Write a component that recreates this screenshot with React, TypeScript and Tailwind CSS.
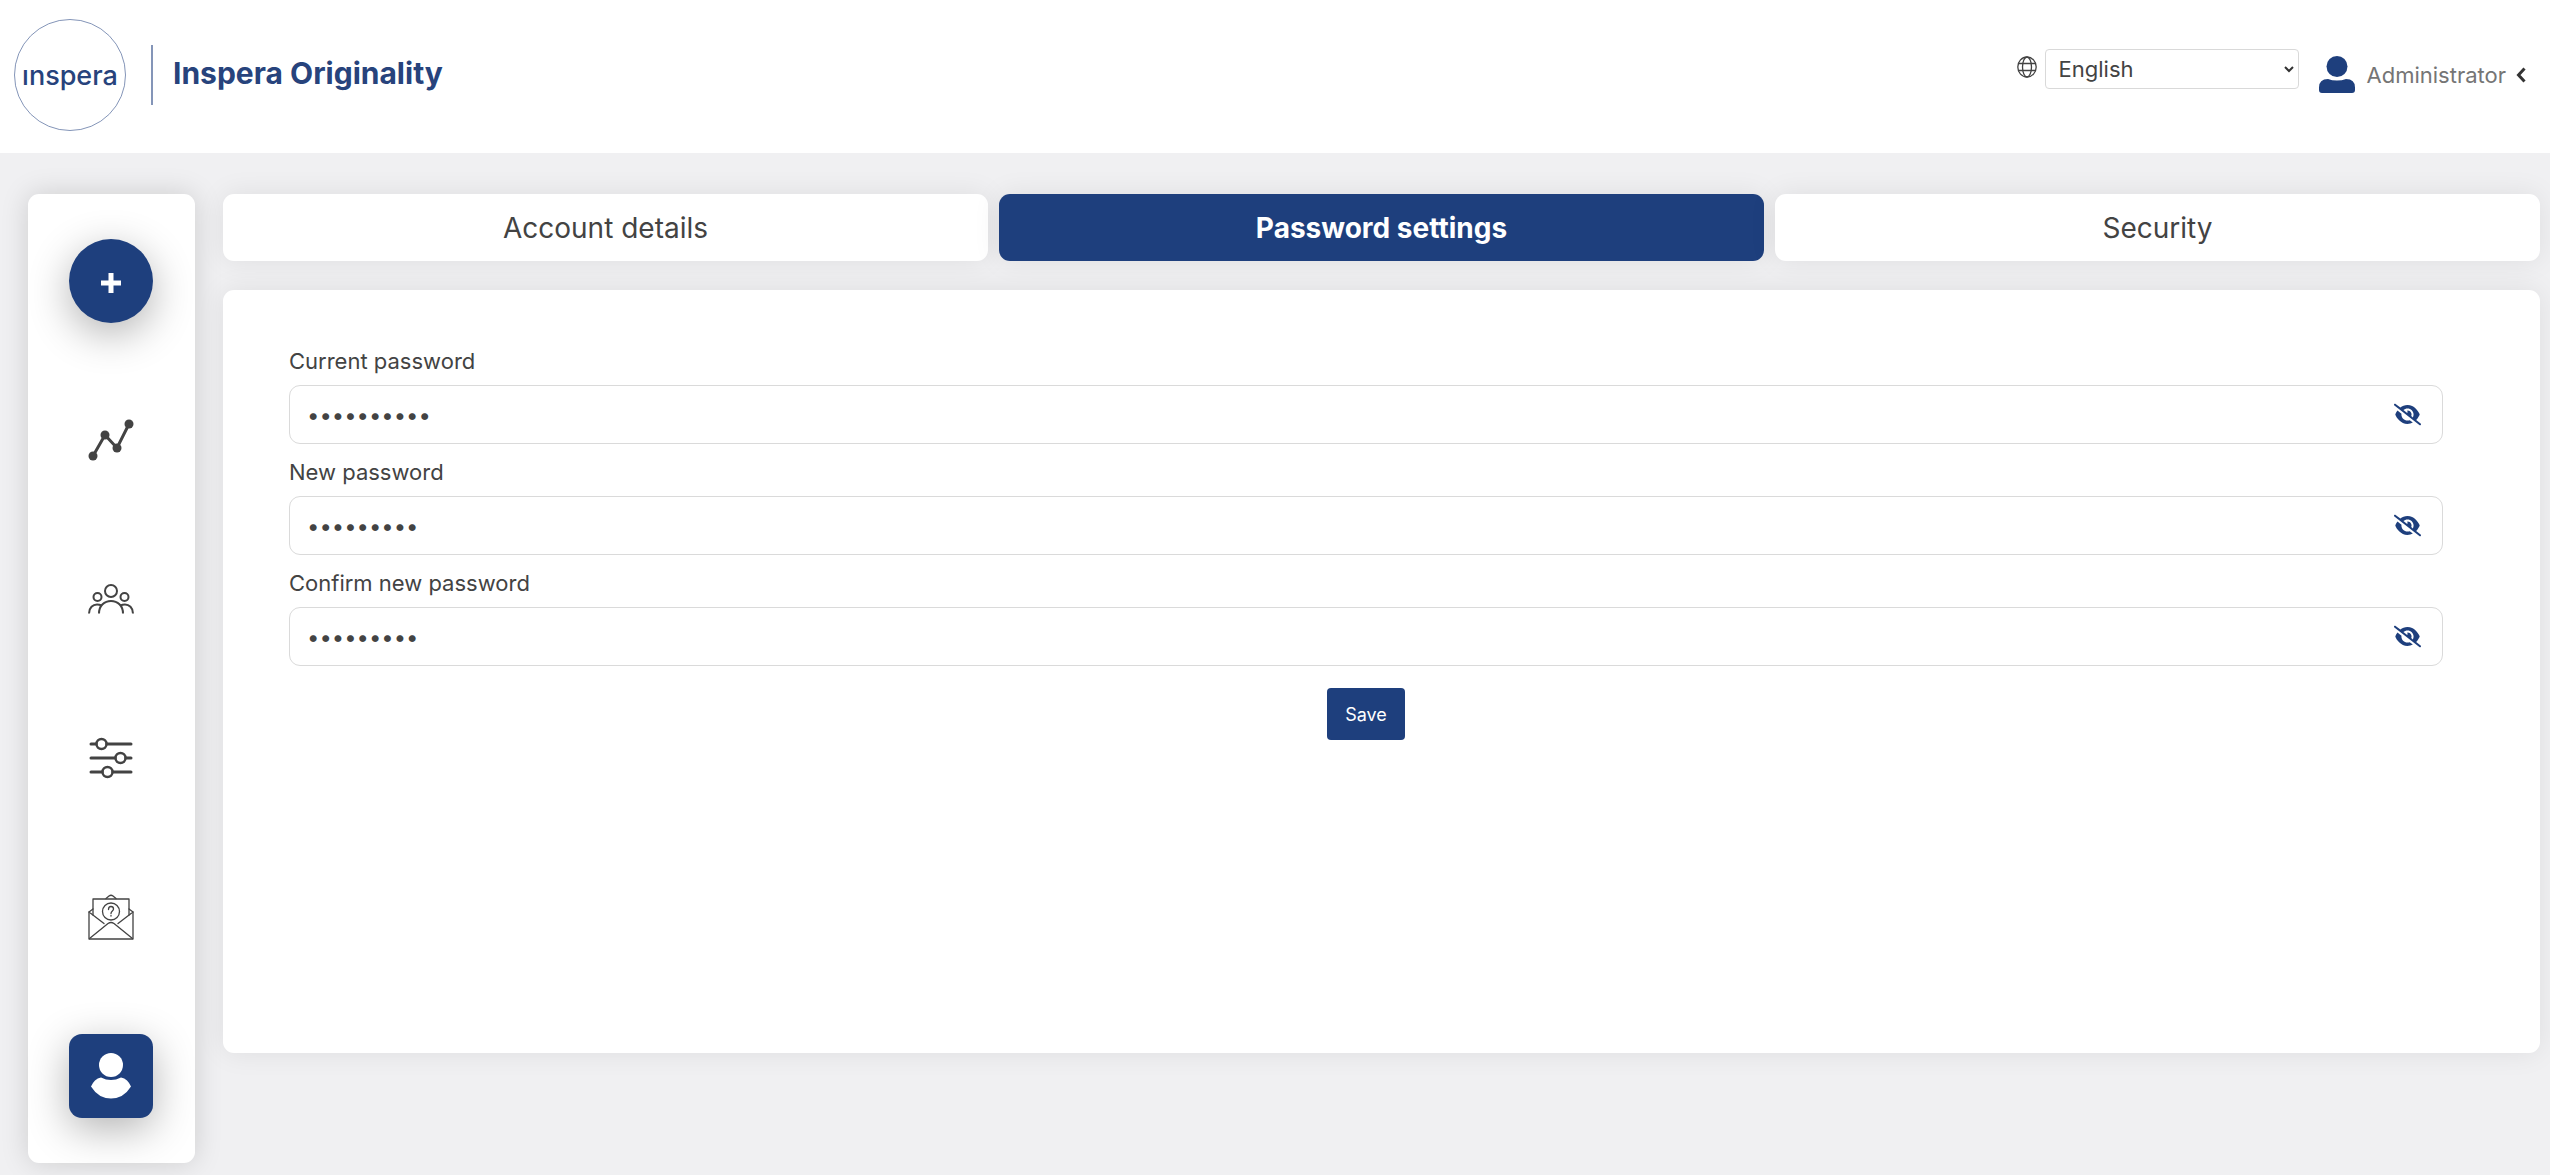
import { useState } from "react";
import { FaEyeSlash, FaEye } from "react-icons/fa6";

const card = "rounded-[11px] bg-white";

function Logo() {
  return (
    <a href="#" className="flex items-center text-[#27437c]">
      <span className="flex h-28 w-28 items-center justify-center rounded-full border border-[#8495b8] text-[27px] leading-none font-medium">
        ınspera
      </span>
      <span className="ml-[25px] h-[60px] w-[2px] bg-[#8495b8]" />
      <span className="ml-5 pb-1 text-[30px] leading-none font-bold">Inspera Originality</span>
    </a>
  );
}

function GlobeIcon() {
  return (
    <svg className="mt-[7px] mr-2" width="20" height="22" viewBox="0 0 20 22" fill="none" stroke="#434343" strokeWidth="1.300" aria-hidden="true">
      <ellipse cx="10" cy="11" rx="9.200" ry="10" />
      <ellipse cx="10" cy="11" rx="4.500" ry="10" />
      <path d="M1.500 7.500h17M1.500 14.500h17" />
    </svg>
  );
}

function TrendIcon() {
  return (
    <svg width="46" height="42" viewBox="0 0 46 42" fill="#434343" stroke="#434343" aria-hidden="true">
      <path d="M5 37 17 16 29 29 41 5" fill="none" strokeWidth="3" />
      <circle cx="5" cy="37" r="4.500" stroke="none" />
      <circle cx="17" cy="16" r="4.500" stroke="none" />
      <circle cx="29" cy="29" r="4.500" stroke="none" />
      <circle cx="41" cy="5" r="4.500" stroke="none" />
    </svg>
  );
}

function PeopleIcon() {
  return (
    <svg width="46" height="32" viewBox="0 0 46 32" fill="none" stroke="#434343" strokeWidth="2" aria-hidden="true">
      <circle cx="23" cy="8" r="6" />
      <circle cx="9.500" cy="14" r="4" />
      <circle cx="36.500" cy="14" r="4" />
      <path d="M11 30.500C11 22.500 16.500 18 23 18s12 4.500 12 12.500" />
      <path d="M1 30.500C1 24.500 5 21.500 9 21.500q2.500 0 4.500 1" />
      <path d="M45 30.500c0-6-4-9-8-9q-2.500 0-4.500 1" />
    </svg>
  );
}

function SlidersIcon() {
  return (
    <svg width="44" height="42" viewBox="0 0 44 42" fill="none" stroke="#434343" strokeWidth="3" strokeLinecap="round" aria-hidden="true">
      <path d="M2 7h5M18 7h24M2 21h24M37 21h5M2 35h11M24 35h18" />
      <circle cx="12.500" cy="7" r="5" strokeWidth="2.500" />
      <circle cx="31.500" cy="21" r="5" strokeWidth="2.500" />
      <circle cx="18.500" cy="35" r="5" strokeWidth="2.500" />
    </svg>
  );
}

function MailIcon() {
  return (
    <svg width="46" height="46" viewBox="0 0 46 46" fill="none" stroke="#434343" strokeWidth="1.300" strokeLinejoin="round" strokeLinecap="round" aria-hidden="true">
      <path d="M1 18v27h44V18" />
      <path d="M5 21V5h36v16" />
      <path d="M18 4.500 21 2q2-1.500 4 0l3 2.500" />
      <path d="M5 15 1 18l15 11.500M41 15l4 3-15 11.500" />
      <path d="M1.500 44.500 20 29.500q3-2 6 0l18.500 15" />
      <circle cx="23" cy="17.500" r="8.500" />
      <path d="M20.500 15.500q0-3 2.500-3t2.500 2.500c0 2-2.500 2-2.500 4.500M23 21.500v.5" />
    </svg>
  );
}

function ProfileIcon() {
  return (
    <svg width="42" height="46" viewBox="0 0 42 46" fill="white" aria-hidden="true">
      <circle cx="21" cy="12" r="12" />
      <path d="M11 24.500q10 5 20 0 3.500.5 6 3 2.500 2.500 4 6Q33.500 45.500 21 45.500T1 33.500q1.500-3.500 4-6 2.500-2.500 6-3z" />
    </svg>
  );
}

const navItems = [
  { name: "Analytics", Icon: TrendIcon },
  { name: "Groups", Icon: PeopleIcon },
  { name: "Settings", Icon: SlidersIcon },
  { name: "Support", Icon: MailIcon },
];

const glow = "shadow-[0_11px_42px_rgba(0,0,0,0.3)]";

function Sidebar() {
  return (
    <nav className={`${card} flex w-[167px] shrink-0 flex-col items-start gap-[75px] py-[45px] pl-[41px] shadow-[0_0_28px_rgba(0,0,0,0.15)]`}>
      <button aria-label="Add" className={`${glow} flex h-[84px] w-[84px] items-center justify-center rounded-full bg-[#1e3f7d] pt-1 text-white`}>
        <svg width="20" height="20" viewBox="0 0 20 20" fill="currentColor" aria-hidden="true">
          <path d="M7.500 0h5v7.500H20v5h-7.500V20h-5v-7.500H0v-5h7.500z" />
        </svg>
      </button>
      {navItems.map(({ name, Icon }) => (
        <a key={name} href="#" aria-label={name} className="flex h-[84px] w-[84px] items-center justify-center">
          <Icon />
        </a>
      ))}
      <a href="#" aria-label="Profile" className={`${glow} flex h-[84px] w-[84px] items-center justify-center rounded-[13px] bg-[#1e3f7d]`}>
        <ProfileIcon />
      </a>
    </nav>
  );
}

function Header() {
  return (
    <header className="flex h-[153px] items-start justify-between bg-white pt-[19px] pr-6 pl-[14px]">
      <Logo />
      <div className="flex items-start pt-[30px]">
        <GlobeIcon />
        <div className="relative">
          <select aria-label="Language" className="h-10 w-[254px] appearance-none rounded-[4px] border border-[#d9d9d9] bg-white pl-[13px] text-[22px] leading-8">
            <option>English</option>
          </select>
          <svg className="pointer-events-none absolute top-[17px] right-[5px]" width="10" height="7" viewBox="0 0 10 7" fill="none" stroke="#333" strokeWidth="2" aria-hidden="true">
            <path d="M1 1 5 5 9 1" />
          </svg>
        </div>
        <button className="mt-[7px] ml-5 flex items-center text-[22px] leading-none text-[#757575]">
          <svg width="36" height="37" viewBox="0 0 36 37" fill="#1e3f7d" aria-hidden="true">
            <ellipse cx="18" cy="10.500" rx="10.500" ry="10.500" />
            <path d="M9 23q4 1.500 9 1.500T27 23q9 0 9 8.500V34q0 3-3 3H3q-3 0-3-3v-2.500Q0 23 9 23z" />
          </svg>
          <span className="ml-3">Administrator</span>
          <svg className="ml-[10px]" width="10" height="16" viewBox="0 0 10 16" fill="none" stroke="#333" strokeWidth="3" aria-hidden="true">
            <path d="M8.500 1.500 2.500 8l6 6.500" />
          </svg>
        </button>
      </div>
    </header>
  );
}

const tabs = ["Account details", "Password settings", "Security"];

function PasswordField({ id, label, initial }: { id: string; label: string; initial: string }) {
  const [visible, setVisible] = useState(false);
  const [value, setValue] = useState(initial);
  return (
    <div>
      <label htmlFor={id} className="block pb-2 text-[22px] leading-8">{label}</label>
      <div className="flex h-[59px] items-center rounded-[11px] border border-[#dadada] pr-[21px] pl-[17px]">
        <input
          id={id}
          type={visible ? "text" : "password"}
          value={value}
          onChange={(e) => setValue(e.target.value)}
          className="h-full min-w-0 flex-1 text-[22px] outline-none"
        />
        <button type="button" aria-label={`Show ${label}`} onClick={() => setVisible(!visible)} className="text-[27px] text-[#1e3f7d]">
          {visible ? <FaEye /> : <FaEyeSlash />}
        </button>
      </div>
    </div>
  );
}

export default function App() {
  const [active, setActive] = useState(1);
  return (
    <div className="min-h-screen bg-[#f0f0f2] font-['Inter',sans-serif] text-[#434343]">
      <Header />
      <div className="flex items-start gap-7 pt-[41px] pr-[10px] pb-[14px] pl-7">
        <Sidebar />
        <main className="min-w-0 flex-1">
          <div role="tablist" className="grid grid-cols-3 gap-[11px]">
            {tabs.map((tab, i) => (
              <button
                key={tab}
                role="tab"
                aria-selected={i === active}
                onClick={() => setActive(i)}
                className={`h-[67px] rounded-[11px] text-[28px] shadow-[0_0_28px_rgba(0,0,0,0.08)] ${i === active ? "bg-[#1e3f7d] font-bold text-white" : "bg-white"}`}
              >
                {tab}
              </button>
            ))}
          </div>
          <section className={`${card} mt-[29px] min-h-[763px] pt-[55px] pr-[97px] pb-10 pl-[66px] shadow-[0_0_28px_rgba(0,0,0,0.08)]`}>
            <form className="flex flex-col gap-3" onSubmit={(e) => e.preventDefault()}>
              <PasswordField id="current" label="Current password" initial="abcdefghij" />
              <PasswordField id="new" label="New password" initial="abcdefghi" />
              <PasswordField id="confirm" label="Confirm new password" initial="abcdefghi" />
              <button className="mt-[10px] h-[52px] w-[78px] self-center rounded-[4px] bg-[#1e3f7d] text-[18px] text-white">Save</button>
            </form>
          </section>
        </main>
      </div>
    </div>
  );
}
